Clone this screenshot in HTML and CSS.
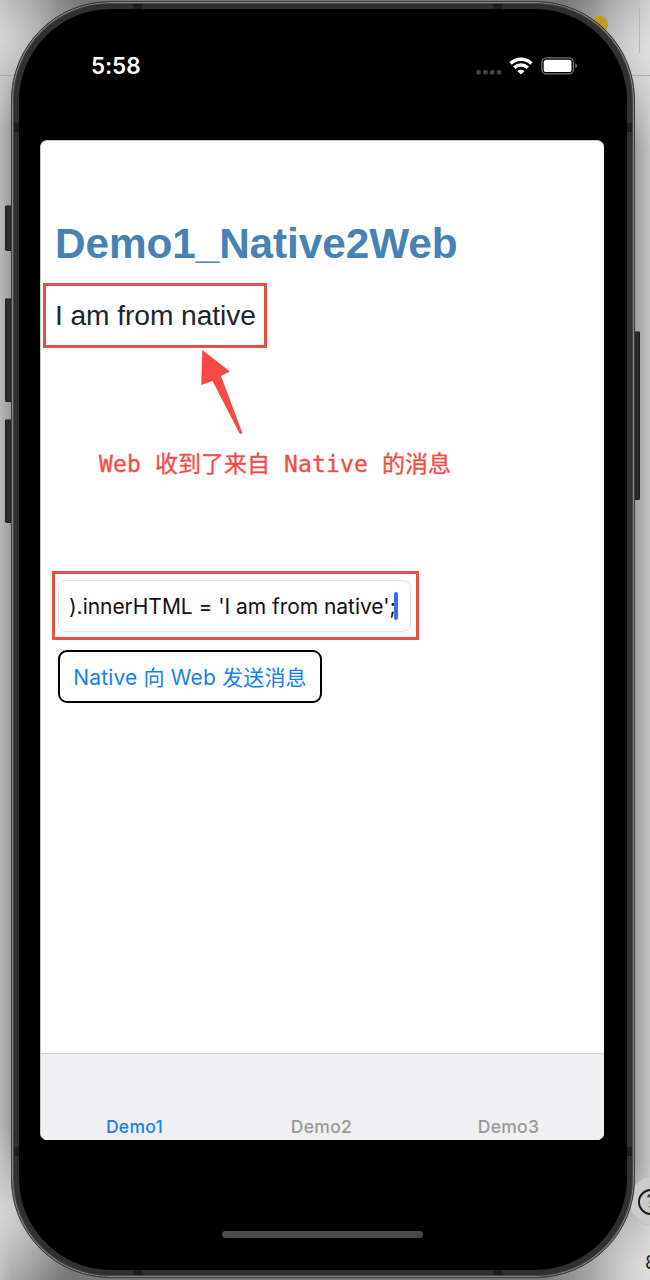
FILE: index.html
```
<!DOCTYPE html>
<html lang="zh">
<head>
<meta charset="utf-8">
<title>Demo1</title>
<link rel="stylesheet" href="styles.css">
</head>
<body>
<div class="desktop">
  <div class="desk-line"></div>
  <div class="desk-tick"></div>
  <div class="desk-dot"></div>
  <div class="help-halo"></div>
  <div class="help">?</div>
  <div class="desk-text">8</div>
  <div class="side-key mute"></div>
  <div class="side-key vol-up"></div>
  <div class="side-key vol-down"></div>
  <div class="side-key power"></div>
  <div class="phone">
    <i class="band bl1"></i><i class="band bl2"></i><i class="band br1"></i><i class="band br2"></i>
    <i class="band bt1"></i><i class="band bt2"></i><i class="band bb1"></i><i class="band bb2"></i>
    <div class="display">
      <header class="status">
        <span class="time">5:58</span>
        <span class="indicators">
          <svg class="dots" width="26" height="5" viewBox="0 0 26 5" fill="#454545"><rect x="0.300" y="0" width="4.500" height="4.400" rx="1.500"/><rect x="7.200" y="0" width="4.500" height="4.400" rx="1.500"/><rect x="14" y="0" width="4.500" height="4.400" rx="1.500"/><rect x="20.800" y="0" width="4.500" height="4.400" rx="1.500"/></svg>
          <svg class="wifi" width="24" height="18" viewBox="0 0 24 18" fill="none" stroke="#fff" stroke-width="3.500"><path d="M1.600 6.500C7.200.9 16.800.9 22.400 6.500"/><path d="M5.200 10.700C9.100 7.100 14.900 7.100 18.800 10.700"/><path d="M12 17.400L8.400 14C10.600 12.200 13.400 12.200 15.600 14Z" fill="#fff" stroke="none"/></svg>
          <svg class="battery" width="37" height="18" viewBox="0 0 37 18"><rect x=".9" y=".9" width="31.500" height="16" rx="4.500" fill="none" stroke="#777" stroke-width="1.300"/><rect x="2.700" y="2.800" width="27.800" height="12.300" rx="2.600" fill="#fff"/><path d="M34.300 6.300c2.200.8 2.200 4.200 0 5z" fill="#777"/></svg>
        </span>
      </header>
      <main class="app">
        <h1 class="title">Demo1_Native2Web</h1>
        <p class="message">I am from native</p>
        <div class="field"><span class="field-text">).innerHTML = 'I am from native';</span><i class="caret"></i></div>
        <button class="send">Native 向 Web 发送消息</button>
        <nav class="tabs">
          <span class="tab active">Demo1</span>
          <span class="tab">Demo2</span>
          <span class="tab">Demo3</span>
        </nav>
      </main>
      <div class="home"></div>
    </div>
  </div>
  <div class="mark mark-message"></div>
  <div class="mark mark-field"></div>
  <svg class="arrow" width="44" height="86" viewBox="0 0 44 86"><path d="M2.300 0L30 21.500L21 26L42.200 82.500Q42 84.500 39.600 83.600L12.500 31L1.300 35Z" fill="#f84a45"/></svg>
  <div class="note">Web <b>收到了来自</b> Native <b>的消息</b></div>
</div>
</body>
</html>
```
FILE: styles.css
```
* { box-sizing: border-box; }
body { margin: 0; font-family: Inter, "Noto Sans CJK SC", sans-serif; }
.desktop {
  position: relative; width: 650px; height: 1280px; overflow: hidden; padding: 1px 0 0 11px;
  background:
    radial-gradient(circle 90px at 0 40px, #d4d4d4 0, rgba(212,212,212,0) 100%),
    radial-gradient(circle 100px at 650px 50px, #dedede 0, rgba(222,222,222,0) 100%),
    radial-gradient(circle 110px at 650px 1270px, #dedede 0, rgba(222,222,222,0) 100%),
    radial-gradient(circle 90px at 0 1215px, #d4d4d4 0, rgba(212,212,212,0) 100%),
    linear-gradient(90deg, #b8b8b8 0, #989898 12px, #777 60px, #777 590px, #a0a0a0 636px, #c2c2c2 650px);
}
.desk-line { position: absolute; left: 0; top: 75px; width: 650px; height: 1px; background: #aaa; }
.desk-tick { position: absolute; left: 639px; top: 8px; width: 1px; height: 45px; background: #b5b5b5; }
.desk-dot { position: absolute; left: 591px; top: 16px; width: 17px; height: 17px; border-radius: 50%; background: #c39a1e; }
.help-halo { position: absolute; left: 629px; top: 1176px; width: 50px; height: 50px; border-radius: 50%; background: #cbcbcb; border: 1px solid #c0c0c0; }
.help { position: absolute; left: 638px; top: 1189px; width: 26px; height: 26px; border: 2px solid #1b1b1b; border-radius: 50%; font-size: 18px; line-height: 22px; text-align: center; color: #1b1b1b; }
.desk-text { position: absolute; left: 645px; top: 1252px; font-size: 19px; line-height: 22px; color: #1b1b1b; }
.side-key { position: absolute; left: 5px; width: 8px; background: #2b2b2b; border: 1px solid #1c1c1c; border-top-color: #555; border-radius: 2px; }
.mute { top: 205px; height: 46px; }
.vol-up { top: 298px; height: 104px; }
.vol-down { top: 419px; height: 104px; }
.power { left: 632px; top: 331px; height: 169px; }
.phone { position: relative; width: 624px; height: 1277px; padding: 7px; border-radius: 99px; background: #303031; border: 1px solid #3a3a3a; box-shadow: inset 0 0 0 1px #888, inset 0 0 0 2px #444; }
.band { position: absolute; background: #1d1d1e; }
.bl1, .bl2 { left: 2px; width: 5px; height: 9px; }
.br1, .br2 { right: 2px; width: 5px; height: 9px; }
.bl1, .br1 { top: 121px; }
.bl2, .br2 { top: 1145px; }
.bt1, .bt2 { top: 2px; width: 9px; height: 5px; }
.bb1, .bb2 { bottom: 2px; width: 9px; height: 5px; }
.bt1, .bb1 { left: 121px; }
.bt2, .bb2 { right: 132px; }
.display { position: relative; height: 1261px; border-radius: 92px; background: #000; display: flex; flex-direction: column; padding-left: 21px; }
.status { height: 131px; display: flex; justify-content: space-between; align-items: flex-start; padding: 44px 49px 0 51px; color: #fff; }
.time { font-size: 22.500px; line-height: 26px; font-weight: 600; letter-spacing: -.1px; }
.indicators { display: flex; align-items: flex-start; padding-top: 4px; }
.dots { margin: 13px 7px 0 0; }
.wifi { margin-right: 8px; }
.app { width: 564px; height: 1000px; background: #fefefe; border-radius: 7px; border: 1px solid #c8c8c8; border-width: 1px 0 0 1px; overflow: hidden; display: flex; flex-direction: column; align-items: flex-start; }
.title { margin: 78px 0 0 14px; font: bold 42.300px/50px "Liberation Sans", Arial, sans-serif; letter-spacing: -.07px; color: #4682b4; white-space: nowrap; }
.message { margin: 29px 0 0 14px; font: 28.200px/34px "Liberation Sans", Arial, sans-serif; letter-spacing: -.08px; color: #212529; white-space: nowrap; }
.field { margin: 248px 0 0 17px; width: 353px; height: 52px; border: 1px solid #e4e4e8; border-radius: 8px; display: flex; align-items: center; padding-left: 10px; color: #111; font-size: 21px; white-space: nowrap; }
.field-text { width: 327px; padding-top: 1px; letter-spacing: -.04px; }
.caret { width: 4px; height: 28px; border-radius: 2px; background: #4169e8; margin-left: -2px; }
.send { margin: 18px 0 0 17px; width: 264px; height: 53px; border: 2px solid #000; border-radius: 9px; background: #fefefe; color: #1681f5; padding: 2px 0 0; font: 21px/30px Inter, "Noto Sans CJK SC", sans-serif; letter-spacing: .17px; white-space: nowrap; }
.tabs { margin-top: auto; width: 100%; height: 87px; background: #f0eff1; border-top: 1px solid #cfced2; display: flex; align-items: flex-end; padding-right: 2px; }
.tab { flex: 1; text-align: center; font-size: 17.500px; line-height: 22px; font-weight: 500; letter-spacing: .3px; color: #999; padding-bottom: 2px; }
.active { color: #1681f5; }
.home { width: 201px; height: 7px; border-radius: 4px; background: #4c4a4c; margin: 91px 0 0 182px; }
.mark { position: absolute; border: 3px solid #e64f49; }
.mark-message { left: 43px; top: 283px; width: 224px; height: 65px; }
.mark-field { left: 52px; top: 571px; width: 367px; height: 69px; }
.arrow { position: absolute; left: 200px; top: 350px; }
.note { position: absolute; left: 99px; top: 447px; font: 23px/30px "DejaVu Sans Mono", "Noto Sans CJK SC", monospace; letter-spacing: .15px; color: #f84a45; -webkit-text-stroke: .3px #f84a45; white-space: nowrap; }
.note b { font: 23px/30px "Noto Sans CJK SC", sans-serif; letter-spacing: 0; }
```
